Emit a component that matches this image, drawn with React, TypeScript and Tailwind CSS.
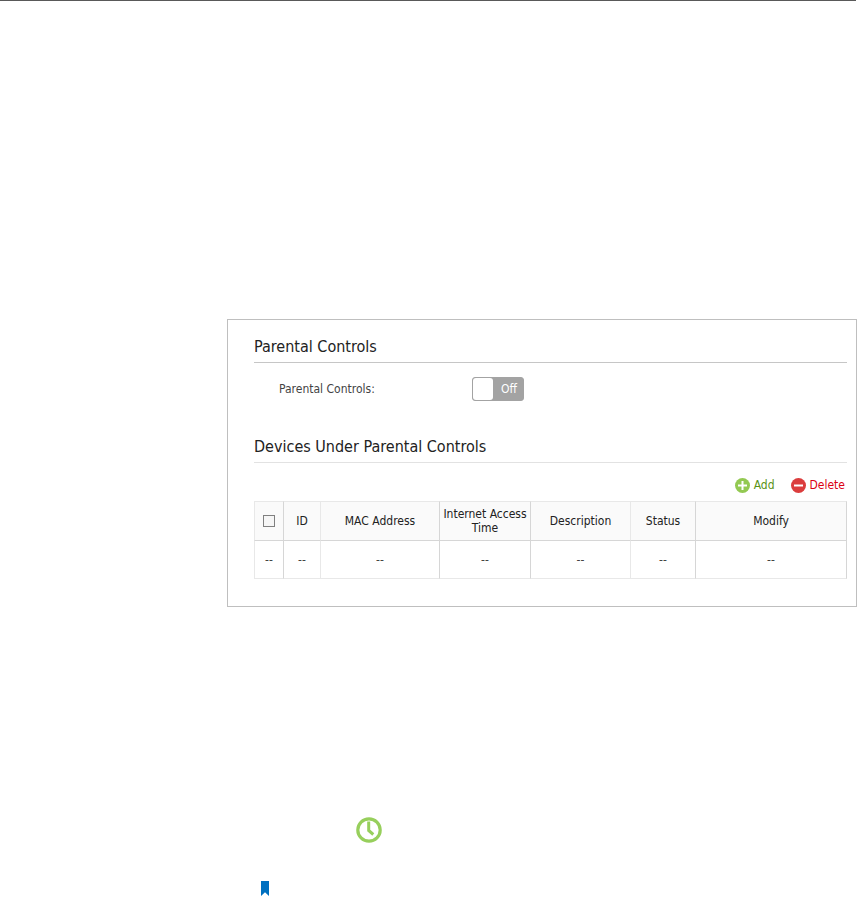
import React, { useState } from 'react';

interface Column {
  label: string;
  width: string;
  border: string;
}

const columns: Column[] = [
  { label: 'ID', width: 'w-[37px]', border: 'border-r-[#e8e8e8]' },
  { label: 'MAC Address', width: 'w-[119px]', border: 'border-r-[#d6d6d6]' },
  { label: 'Internet Access Time', width: 'w-[91px]', border: 'border-r-[#d6d6d6]' },
  { label: 'Description', width: 'w-[100px]', border: 'border-r-[#e8e8e8]' },
  { label: 'Status', width: 'w-[65px]', border: 'border-r-[#d6d6d6]' },
  { label: 'Modify', width: '', border: 'border-r-[#d6d6d6]' },
];

const AddIcon = () => (
  <svg viewBox="0 0 15 15" className="w-[15px] h-[15px] shrink-0" aria-hidden="true">
    <circle cx="7.5" cy="7.5" r="7.5" fill="#93c952" />
    <path d="M7.5 3v9M3 7.5h9" stroke="#fff" strokeWidth="2" />
  </svg>
);

const DeleteIcon = () => (
  <svg viewBox="0 0 15 15" className="w-[15px] h-[15px] shrink-0" aria-hidden="true">
    <circle cx="7.5" cy="7.5" r="7.5" fill="#db3d3d" />
    <path d="M3 7.5h9" stroke="#fff" strokeWidth="2" />
  </svg>
);

const ClockIcon = () => (
  <svg viewBox="0 0 26 26" className="w-[26px] h-[26px]" fill="none" stroke="#97cf5c" aria-hidden="true">
    <circle cx="13" cy="13" r="11.2" strokeWidth="3.2" />
    <path d="M12.7 4.5v9l4.6 4" strokeWidth="3" />
  </svg>
);

const BookmarkIcon = () => (
  <svg viewBox="0 0 8 15" className="w-2 h-[15px]" aria-hidden="true">
    <path d="M0 0h8v15L4 11.3 0 15z" fill="#0070c0" />
  </svg>
);

export default function App() {
  const [enabled, setEnabled] = useState(false);
  const [allSelected, setAllSelected] = useState(false);

  return (
    <div className="bg-white font-['DejaVu_Sans_Condensed','Open_Sans',sans-serif] text-xs text-[#444]">
      <header className="mr-px border-t border-[#595959]" />

      <main className="pl-[227px] pt-[318px]">
        <section className="border border-[#bfbfbf] pl-[26px] pr-[9px] pt-[15px] pb-[27px]">
          <h2 className="border-b border-[#c6c6c6] pb-[3px] text-base leading-6 text-[#222]">Parental Controls</h2>

          <div className="mt-3.5 flex items-center pl-[25px]">
            <label id="parental-label" htmlFor="parental-toggle" className="w-[193px]">Parental Controls:</label>
            <button
              id="parental-toggle"
              type="button"
              role="switch"
              aria-checked={enabled}
              aria-labelledby="parental-label"
              onClick={() => setEnabled(!enabled)}
              className={`flex h-6 w-[52px] items-center rounded-[3px] border text-white ${enabled ? 'flex-row-reverse border-[#93c952] bg-[#93c952]' : 'border-[#a3a3a3] bg-[#a3a3a3]'}`}
            >
              <span className="h-[22px] w-5 rounded-[3px] bg-white" />
              <span className="flex-1 pl-0.5">{enabled ? 'On' : 'Off'}</span>
            </button>
          </div>

          <h2 className="mt-[34px] border-b border-[#e2e2e2] pb-[3px] text-base leading-6 text-[#222]">Devices Under Parental Controls</h2>

          <div className="mt-3.5 flex justify-end gap-4 pr-0.5 leading-4">
            <button type="button" className="flex items-center gap-1 text-[#5a9216]">
              <AddIcon />
              Add
            </button>
            <button type="button" className="flex items-center gap-1 text-[#dc0014]">
              <DeleteIcon />
              Delete
            </button>
          </div>

          <table className="mt-2 w-full table-fixed border-separate border-spacing-0 text-center leading-[14px]">
            <thead className="bg-[#fafafa] text-[#222]">
              <tr className="h-10">
                <th className="w-[30px] border border-[#e8e8e8] border-r-[#d6d6d6] border-b-[#d6d6d6] p-0 align-middle">
                  <input
                    type="checkbox"
                    aria-label="Select all devices"
                    checked={allSelected}
                    onChange={e => setAllSelected(e.target.checked)}
                    className="mx-auto block h-3 w-3 appearance-none border border-[#808080] bg-[#f6f6f6] checked:bg-[#808080]"
                  />
                </th>
                {columns.map(col => (
                  <th
                    key={col.label}
                    className={`border-y border-r border-t-[#e8e8e8] border-b-[#d6d6d6] p-0 align-middle font-normal ${col.width} ${col.border}`}
                  >
                    {col.label}
                  </th>
                ))}
              </tr>
            </thead>
            <tbody>
              <tr className="h-[38px]">
                <td className="border border-t-0 border-[#e8e8e8] border-r-[#d6d6d6] p-0 align-middle">--</td>
                {columns.map(col => (
                  <td key={col.label} className={`border-r border-b border-b-[#e8e8e8] p-0 align-middle ${col.border}`}>--</td>
                ))}
              </tr>
            </tbody>
          </table>
        </section>

        <div className="pl-[129px] pt-[210px]">
          <ClockIcon />
        </div>
        <div className="pl-[34px] pt-[38px]">
          <BookmarkIcon />
        </div>
      </main>
    </div>
  );
}
